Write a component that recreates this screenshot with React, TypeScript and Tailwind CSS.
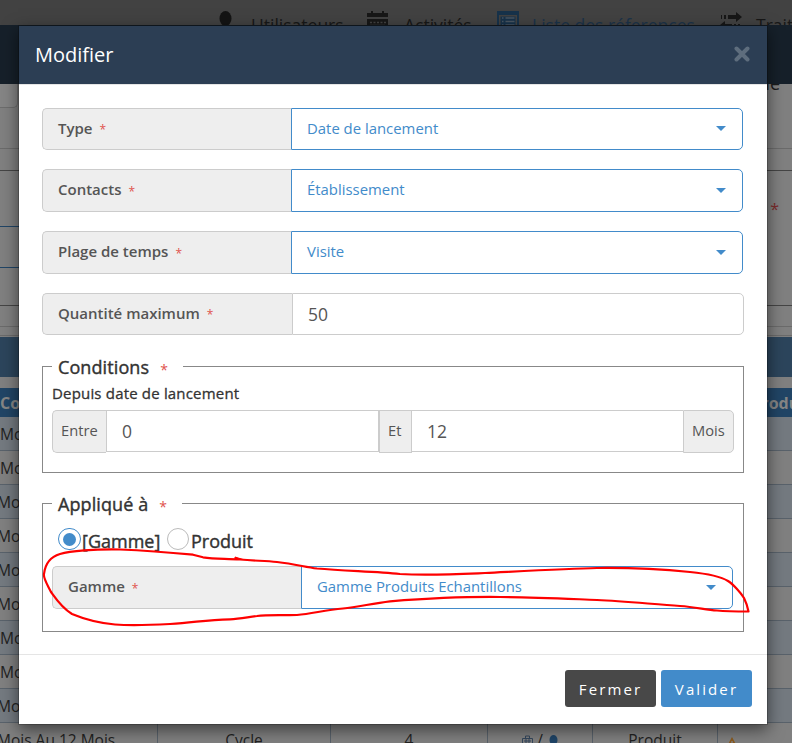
import React from "react";

function Star({ className = "" }: { className?: string }) {
  return <span className={`font-normal text-[#e0524d] ${className}`}>*</span>;
}

function Label({ text }: { text: string }) {
  return (
    <span className="flex w-[249px] shrink-0 items-center rounded-l-[5px] border border-r-0 border-[#ccc] bg-[#eee] pb-[2px] pl-[15px] text-[15px] font-semibold text-[#555]">
      {text}
      <Star className="mt-[4px] ml-[7px] text-[12px]" />
    </span>
  );
}

function SelectRow({ label, value, className }: { label: string; value: string; className: string }) {
  return (
    <div className={`flex ${className}`}>
      <Label text={label} />
      <button className="flex flex-1 items-center justify-between rounded-r-[5px] border border-[#428bca] bg-white pr-[16px] pl-[15px] text-[14.9px] text-[#428bca]">
        <span className="-mt-[2px]">{value}</span>
        <svg width="10" height="5" viewBox="0 0 10 5" className="-mt-[1px]">
          <path d="M0 0h10L5 5z" fill="#428bca" />
        </svg>
      </button>
    </div>
  );
}

function Nav() {
  return (
    <nav className="flex h-[25px] shrink-0 items-start overflow-hidden bg-[#424242] pt-[11px] text-[17.5px] leading-[29px] whitespace-nowrap text-[#171717]">
      <svg className="ml-[219px] shrink-0" width="13" height="22" viewBox="0 0 13 22" fill="#141414">
        <ellipse cx="6.5" cy="7.5" rx="6" ry="7.5" />
        <path d="M4 13h5v9H4z" />
      </svg>
      <span className="ml-[19px] w-[92px] shrink-0">Utilisateurs</span>
      <svg className="ml-[24px] shrink-0" width="21" height="20" viewBox="0 0 21 20" fill="#171717">
        <path d="M0 2h4V0h2v2h9V0h2v2h4v4H0zM0 8h21v12H0z" />
        <path d="M3 11.500h2m1.500 0h2m1.500 0h2m1.500 0h2m1.500 0h2M3 14.500h15" stroke="#424242" strokeWidth="1.500" />
      </svg>
      <span className="ml-[16px] w-[67px] shrink-0">Activités</span>
      <svg className="ml-[26px] shrink-0" width="22" height="20" viewBox="0 0 22 20">
        <path d="M0 0h22v20H0z" fill="#17324a" />
        <path d="M2 4h18v16H2z" fill="#424242" />
        <path d="M3.500 5.500h15v14h-15z" fill="#17324a" />
        <path d="M5 7h1.500m2 0H17.500M5 10.500h1.500m2 0H17.500M5 14h1.500m2 0H17.500" stroke="#4a5661" strokeWidth="1.300" />
      </svg>
      <span className="ml-[13px] w-[163px] shrink-0 text-[#1b334a]">Liste des réferences</span>
      <svg className="ml-[25px] shrink-0" width="23" height="20" viewBox="0 0 23 20" fill="#171717">
        <path d="M1 4h1v4H1zM4 4h2v4H4zM8 4h8V1l6 5-6 5V8H8z" />
        <path d="M0 14l5-4v3h7v3H5v3zM14 13h2v3h-2zM18 13h2v3h-2z" />
      </svg>
      <span className="ml-[13px] shrink-0">Traitement</span>
    </nav>
  );
}

const shifted = [false, false, true, true, true, true, false, false, true];

function Backdrop() {
  return (
    <div className="flex h-full flex-col bg-[#808080]">
      <Nav />
      <div className="h-[59px] shrink-0 bg-[#16202a]" />
      <div className="flex h-[65px] shrink-0 items-start justify-between overflow-hidden border-b border-[#6b6b6b]">
        <div className="h-[24px] w-[18px] rounded-br-[5px] border-r border-b border-[#6d6d6d] bg-[#858585]" />
        <span className="-mt-[11px] mr-[12px] text-[18px] leading-[20px] text-[#1c1c1c]">ne</span>
      </div>
      <div className="h-[22px] shrink-0 border-b border-[#454545]" />
      <div className="flex h-[135px] shrink-0 justify-between border-b border-[#454545]">
        <div className="flex w-[30px] flex-col pt-[55px]">
          <div className="h-[42px] border-y border-[#214566]" />
        </div>
        <span className="mt-[26px] mr-[13px] text-[16px] text-[#7c2c2c]">*</span>
      </div>
      <div className="h-[21px] shrink-0 border-b border-[#6b6b6b]" />
      <div className="h-[9px] shrink-0 border-b border-[#6b6b6b]" />
      <div className="mt-[1px] h-[40px] shrink-0 bg-[#2c455c]" />
      <div className="mt-[11px] flex h-[29px] shrink-0 items-center justify-between overflow-hidden bg-[#214566] text-[16px] font-bold text-[#858585]">
        <span>Contact</span>
        <span className="-mr-[19px]">Produit</span>
      </div>
      {shifted.map((isShifted, i) => (
        <div
          key={i}
          className={`flex h-[34px] shrink-0 items-center border-b border-[#59626b] pt-[2px] text-[15.6px] text-[#222] ${i % 2 ? "bg-[#808080]" : "bg-[#747a80]"}`}
        >
          <span className={isShifted ? "-ml-[3px]" : ""}>Mois</span>
        </div>
      ))}
      <div className="flex h-[34px] shrink-0 items-center text-[15.5px] text-[#222]">
        <span className="-ml-[3px] flex h-full w-[161px] shrink-0 items-center border-r border-[#59626b] pt-[2px]">Mois Au 12 Mois</span>
        <span className="flex h-full w-[173px] shrink-0 items-center justify-center border-r border-[#59626b] pt-[2px]">Cycle</span>
        <span className="flex h-full w-[157px] shrink-0 items-center justify-center border-r border-[#59626b] pt-[2px]">4</span>
        <span className="flex h-full w-[105px] shrink-0 items-center justify-center gap-[4px] border-r border-[#59626b] pt-[2px]">
          <svg width="11" height="12" viewBox="0 0 11 12" fill="none" stroke="#34475c">
            <path d="M3.500 3V1h4v2M.5 3.500h10v8H.5zM2 6h7M2 8.500h7M4 3v8M7 3v8" />
          </svg>
          <span>/</span>
          <svg width="9" height="13" viewBox="0 0 9 13" fill="#1f4467" className="ml-[2px]">
            <ellipse cx="4.500" cy="5" rx="4" ry="5" />
            <path d="M3 8h3v5H3z" />
          </svg>
        </span>
        <span className="flex h-full w-[125px] shrink-0 items-center justify-center border-r border-[#59626b] pt-[2px]">Produit</span>
        <svg width="12" height="12" viewBox="0 0 12 12" className="mt-[6px] ml-[8px]">
          <path d="M6 0l6 11H0z" fill="#8a5a1e" />
          <path d="M6 4v4" stroke="#808080" strokeWidth="1.500" />
        </svg>
      </div>
    </div>
  );
}

function Legend({ text, width }: { text: string; width: string }) {
  return (
    <legend className={`flex h-[27px] items-center pt-[2px] pl-[6px] text-[18px] tracking-[0.1px] text-[#333] ${width}`}>
      <span className="[-webkit-text-stroke:0.4px_#333]">{text}</span>
      <Star className="mt-[3px] ml-[11px] text-[14px]" />
    </legend>
  );
}

function Modal() {
  return (
    <div className="absolute top-[25px] left-[18px] h-[700px] w-[750px] border border-black/20 bg-white bg-clip-padding shadow-[0_5px_15px_rgba(0,0,0,0.5)]">
      <header className="flex h-[59px] items-center justify-between border-b border-[#e5e5e5] bg-[#2c3e54] pr-[17px] pl-[16px] text-[20px] text-white">
        <span>Modifier</span>
        <svg width="16" height="16" viewBox="0 0 16 16" className="-mt-[3px]">
          <path d="M2.500 2.500l11 11M13.500 2.500l-11 11" stroke="#5e6d7d" strokeWidth="4" strokeLinecap="round" />
        </svg>
      </header>
      <div className="pt-[23px] pl-[23px]">
        <SelectRow className="h-[42px] w-[701px]" label="Type" value="Date de lancement" />
        <SelectRow className="mt-[19px] h-[43px] w-[701px]" label="Contacts" value="Établissement" />
        <SelectRow className="mt-[19px] h-[43px] w-[701px]" label="Plage de temps" value="Visite" />
        <div className="mt-[19px] flex h-[42px] w-[702px]">
          <Label text="Quantité maximum" />
          <span className="w-px border-y border-[#ccc] bg-[#eee]" />
          <div className="flex flex-1 items-center rounded-r-[5px] border border-[#ccc] pl-[15px] text-[17.5px] text-[#555]">50</div>
        </div>
        <fieldset className="mt-[18px] h-[120px] w-[702px] border border-[#888] px-[9px]">
          <Legend text="Conditions" width="w-[131px]" />
          <div className="h-[30px] text-[15px] leading-[27px] tracking-[0.18px] text-[#333] [-webkit-text-stroke:0.3px_#333]">Depuis date de lancement</div>
          <div className="flex h-[43px] items-start text-[14.7px] text-[#555]">
            <span className="flex h-[43px] w-[54px] items-center rounded-l-[5px] border border-r-0 border-[#ccc] bg-[#eee] pb-[2px] pl-[8px]">Entre</span>
            <span className="flex h-[42px] w-[273px] items-center border border-[#ccc] pl-[15px] text-[17.5px]">0</span>
            <span className="flex h-[43px] w-[33px] items-center border border-[#ccc] bg-[#eee] pb-[2px] pl-[8px]">Et</span>
            <span className="flex h-[42px] w-[271px] items-center border-y border-[#ccc] pl-[15px] text-[17.5px]">12</span>
            <span className="flex h-[43px] w-[51px] items-center rounded-r-[5px] border border-[#ccc] bg-[#eee] pb-[2px] pl-[8px]">Mois</span>
          </div>
        </fieldset>
        <fieldset className="mt-[17px] h-[142px] w-[702px] border border-[#888] px-[9px]">
          <Legend text="Appliqué à" width="w-[130px]" />
          <div className="flex h-[49px] items-start pt-[11px] pl-[6px] text-[18px] leading-[27px] text-[#333]">
            <span className="mr-[1px] flex h-[22px] w-[23px] items-center justify-center rounded-full border border-[#428bca]">
              <span className="h-[13px] w-[13px] rounded-full bg-[#428bca]" />
            </span>
            <span className="w-[78px] [-webkit-text-stroke:0.4px_#333]">[Gamme]</span>
            <span className="mr-[2px] ml-[7px] h-[22px] w-[22px] rounded-full border border-[#bbb]" />
            <span className="[-webkit-text-stroke:0.4px_#333]">Produit</span>
          </div>
          <SelectRow className="h-[43px] w-[681px]" label="Gamme" value="Gamme Produits Echantillons" />
        </fieldset>
      </div>
      <footer className="mt-[22px] flex justify-end gap-[5px] border-t border-[#e5e5e5] pt-[15px] pr-[15px] text-[15px] tracking-[2.1px] text-white">
        <button className="h-[37px] w-[91px] rounded-[3px] bg-[#484848] pt-[1px]">Fermer</button>
        <button className="h-[37px] w-[91px] rounded-[3px] bg-[#428bca] pt-[1px]">Valider</button>
      </footer>
    </div>
  );
}

function Scribble() {
  return (
    <svg className="absolute top-0 left-0" width="792" height="743" viewBox="0 0 792 743" fill="none" stroke="#fe0000" strokeWidth="2.200" strokeLinejoin="round">
      <path d="M60 554C70 551 95 549 120 549.500C145 550.500 165 552 193 554.700L203 557.300C215 559 225 558.500 240 559.500C255 561 265 560.500 277 562C295 564 305 567 317 568.500C345 571 375 571.500 400 574C430 575.500 460 574 485 573C525 571 570 568.500 597 568C640 567.500 665 569.500 690 572C705 573.500 720 576 728 581C733 584 741 593 744 598Q747 604 748.500 611.500C740 611.500 727 611.500 717 610.500C705 609.500 695 607 680 606C655 604.500 625 601 597 600C560 598.500 530 597 500 597C460 596.500 420 599 390 601.300C372 603.500 358 607 343 608.500C325 610 313 613.500 297 615C285 615.500 268 614.500 257 616C248 617 240 619 230 619.300C205 620 195 622.500 170 624C150 625 130 625.500 115 624.500C98 623 84 619 72 614C62 608 56 599 51 592C47 584 43 578 44 574C45 565 50 557 60 554Z" />
      <path d="M235 557l8 2.500h-8z" fill="#fe0000" strokeWidth="1" />
    </svg>
  );
}

export default function App() {
  return (
    <div className="relative h-[743px] w-[792px] overflow-hidden font-['Open_Sans','Noto_Sans',sans-serif]">
      <Backdrop />
      <Modal />
      <Scribble />
    </div>
  );
}
